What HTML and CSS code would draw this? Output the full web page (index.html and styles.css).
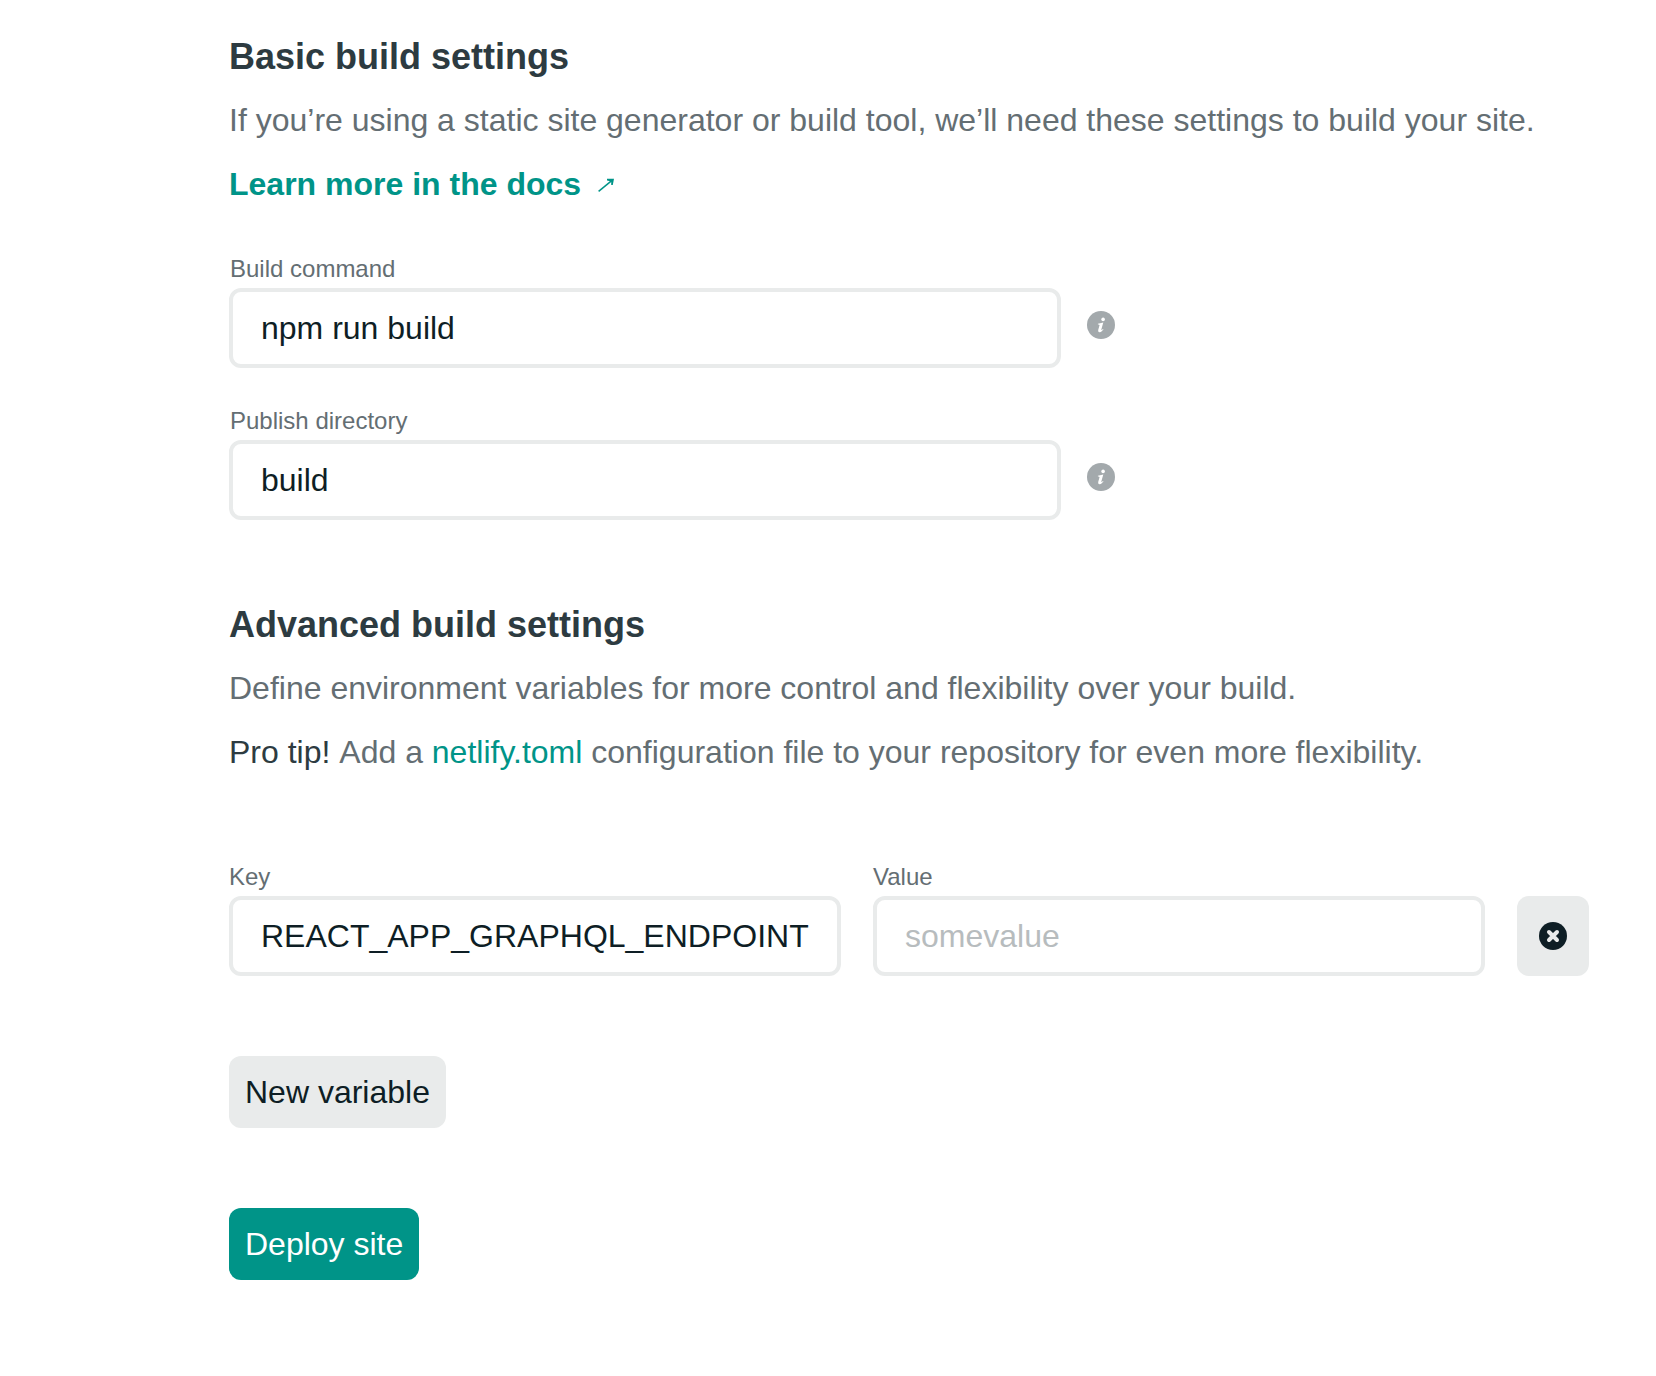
FILE: index.html
```html
<!DOCTYPE html>
<html lang="en">
<head>
<meta charset="utf-8">
<title>Build settings</title>
<link rel="stylesheet" href="styles.css">
</head>
<body>
<form class="page">
  <section class="section">
    <h2 class="title">Basic build settings</h2>
    <p class="text">If you’re using a static site generator or build tool, we’ll need these settings to build your site.</p>
    <p class="text"><a class="link link-strong">Learn more in the docs<svg class="arrow" width="17" height="14" viewBox="0 0 17 14"><path d="M.6 13.4 14 2.4" fill="none" stroke="currentColor" stroke-width="1.5"/><path d="M9 .8 16 .8 14.8 7 13.2 7 13.2 3.4 9 2.4Z" fill="currentColor"/></svg></a></p>
    <div class="fields">
      <div class="field">
        <label class="label" for="cmd">Build command</label>
        <div class="row">
          <input class="input wide" id="cmd" value="npm run build">
          <svg class="info" width="28" height="28" viewBox="0 0 28 28"><circle cx="14" cy="14" r="14" fill="#a3a9ac"/><circle cx="16.1" cy="8.4" r="1.8" fill="#fff"/><path d="M10.9 12.8 16.3 11.4 14.3 18.6Q14.2 19.6 16 18L16.5 18.5Q14.3 21.3 12.3 21.2 10.7 21 11.2 19L12.6 13.9Q12.4 13.3 10.9 13.5Z" fill="#fff"/></svg>
        </div>
      </div>
      <div class="field">
        <label class="label" for="dir">Publish directory</label>
        <div class="row">
          <input class="input wide" id="dir" value="build">
          <svg class="info" width="28" height="28" viewBox="0 0 28 28"><circle cx="14" cy="14" r="14" fill="#a3a9ac"/><circle cx="16.1" cy="8.4" r="1.8" fill="#fff"/><path d="M10.9 12.8 16.3 11.4 14.3 18.6Q14.2 19.6 16 18L16.5 18.5Q14.3 21.3 12.3 21.2 10.7 21 11.2 19L12.6 13.9Q12.4 13.3 10.9 13.5Z" fill="#fff"/></svg>
        </div>
      </div>
    </div>
  </section>
  <section class="section advanced">
    <h2 class="title">Advanced build settings</h2>
    <p class="text">Define environment variables for more control and flexibility over your build.</p>
    <p class="text"><span class="tip">Pro tip!</span> Add a <a class="link">netlify.toml</a> configuration file to your repository for even more flexibility.</p>
    <div class="variables">
      <div class="field">
        <label class="label" for="key">Key</label>
        <input class="input" id="key" value="REACT_APP_GRAPHQL_ENDPOINT">
      </div>
      <div class="field">
        <label class="label" for="value">Value</label>
        <input class="input" id="value" placeholder="somevalue">
      </div>
      <button class="button remove" type="button" aria-label="Delete"><svg width="28" height="28" viewBox="0 0 28 28"><circle cx="14" cy="14" r="14" fill="#0e1e25"/><path d="m10 10 8 8M18 10l-8 8" stroke="#e9ebeb" stroke-width="4" stroke-linecap="round"/></svg></button>
    </div>
  </section>
  <div class="actions">
    <button class="button" type="button">New variable</button>
    <button class="button primary" type="button">Deploy site</button>
  </div>
</form>
</body>
</html>
```
FILE: styles.css
```css
* {
  box-sizing: border-box;
}

body {
  margin: 0;
  background: #fff;
  color: #646e73;
  font: 32px/48px "Liberation Sans", Arial, sans-serif;
}

.page {
  padding: 32px 67px 96px 229px;
}

.title {
  margin: 0 0 -2px;
  color: #2d3b41;
  font-size: 36px;
  line-height: 50px;
}

.text {
  margin: 16px 0 0;
  white-space: nowrap;
}

.link {
  color: #009488;
}

.link-strong {
  font-weight: bold;
}

.arrow {
  margin-left: 17px;
  vertical-align: 3px;
}

.tip {
  margin-right: 1.8px;
  color: #2d3b41;
}

.fields {
  display: flex;
  flex-direction: column;
  gap: 36px;
  margin-top: 44px;
}

.fields .label {
  padding-left: 1px;
}

.label {
  display: block;
  margin-bottom: 2px;
  font-size: 24px;
  line-height: 34px;
}

.row {
  display: flex;
  align-items: center;
  gap: 26px;
}

.input {
  display: block;
  width: 612px;
  height: 80px;
  padding: 0 28px;
  border: 4px solid #e9ebeb;
  border-radius: 12px;
  outline: 0;
  background: #fff;
  color: #0e1e25;
  font: inherit;
}

.wide {
  width: 832px;
}

.input::placeholder {
  color: #b7bcbe;
}

.info {
  margin-bottom: 6px;
}

.advanced {
  margin-top: 80px;
}

.variables {
  display: flex;
  align-items: flex-end;
  gap: 32px;
  margin-top: 84px;
}

.button {
  height: 72px;
  padding: 0 16px;
  border: 0;
  border-radius: 12px;
  background: #e9ebeb;
  color: #0e1e25;
  font: inherit;
}

.remove {
  display: flex;
  align-items: center;
  justify-content: center;
  width: 72px;
  height: 80px;
}

.primary {
  background: #009488;
  color: #fff;
}

.actions {
  display: flex;
  flex-direction: column;
  align-items: flex-start;
  gap: 80px;
  margin-top: 80px;
}
```
